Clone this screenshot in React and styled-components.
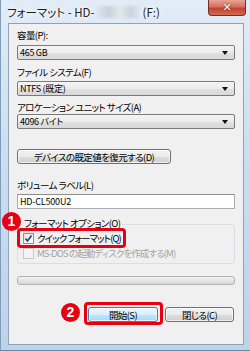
import React from 'react'
import styled, { createGlobalStyle } from 'styled-components'

const GlobalStyle = createGlobalStyle`
  html, body { margin: 0; padding: 0; background: #fff; }
  body { font-family: "Noto Sans CJK JP", "Noto Sans", sans-serif; }
`

const jp = `"Noto Sans CJK JP", "Noto Sans", sans-serif`

const Frame = styled.div`
  position: relative;
  width: 250px;
  height: 351px;
  box-sizing: border-box;
  background: linear-gradient(180deg, #e2ecf7 0%, #cddff1 40%, #bcd3ea 100%);
  border-left: 1px solid #7f9db9;
  border-bottom: 1px solid #6c87a3;
  display: flex;
  flex-direction: column;
  overflow: hidden;
`

const TitleBar = styled.div`
  height: 23px;
  display: flex;
  align-items: flex-start;
  justify-content: space-between;
  padding-left: 6px;
  padding-right: 4px;
`

const Title = styled.div`
  margin-top: 5px;
  font-family: ${jp};
  font-size: 11.5px;
  line-height: 14px;
  color: #1e1e1e;
  font-feature-settings: "palt";
  white-space: nowrap;
  display: flex;
  align-items: center;
  text-shadow: 0 0 6px #fff, 0 0 4px #fff;
`

const Blurred = styled.span`
  display: inline-block;
  width: 42px;
  height: 12px;
  margin: 0 4px 0 2px;
  background: linear-gradient(90deg, #dce4ec 0%, #c9d2dc 30%, #e3e8ee 55%, #cbd3dc 80%, #dde4eb 100%);
  filter: blur(1.2px);
`

const CloseBtn = styled.div`
  width: 38px;
  height: 16px;
  box-sizing: border-box;
  border: 1px solid #7a2a2a;
  border-top: none;
  border-radius: 0 0 4px 4px;
  background: linear-gradient(180deg, #e8a493 0%, #d4715e 45%, #c2432f 55%, #d06a53 100%);
  display: flex;
  align-items: center;
  justify-content: center;
  color: #fff;
  font-family: "DejaVu Sans", sans-serif;
  font-weight: bold;
  font-size: 11px;
  text-shadow: 0 0 2px #5a1a10;
`

const Panel = styled.div`
  margin-left: 7px;
  width: 236px;
  height: 322px;
  box-sizing: border-box;
  border: 1px solid #8fa2b8;
  background: #f0f0f0;
  padding: 5px 8px 0 8px;
  display: flex;
  flex-direction: column;
`

const Label = styled.div`
  font-family: ${jp};
  font-size: 9.5px;
  letter-spacing: -0.6px;
  line-height: 12px;
  height: 12px;
  color: #000;
  font-feature-settings: "palt";
  margin-top: ${p => p.$mt || 0}px;
  white-space: nowrap;
`

const Combo = styled.div`
  height: 15px;
  box-sizing: border-box;
  border: 1px solid #7a7a7a;
  border-radius: 2px;
  background: linear-gradient(180deg, #f4f4f4 0%, #ececec 50%, #e0e0e0 51%, #d9d9d9 100%);
  display: flex;
  align-items: center;
  justify-content: space-between;
  padding: 0 6px 0 2px;
  margin-top: ${p => p.$mt || 0}px;
  font-family: ${jp};
  font-size: 9px;
  letter-spacing: -0.3px;
  color: #000;
  font-feature-settings: "palt";
`

const Arrow = styled.span`
  width: 0;
  height: 0;
  border-left: 3.5px solid transparent;
  border-right: 3.5px solid transparent;
  border-top: 4px solid #111;
`

const Button = styled.div`
  width: ${p => p.$w}px;
  height: ${p => p.$h || 15}px;
  box-sizing: border-box;
  border: 1px solid ${p => (p.$primary ? '#3c7fb1' : '#707070')};
  border-radius: 3px;
  background: ${p =>
    p.$primary
      ? 'linear-gradient(180deg, #eaf6fd 0%, #d9f0fc 50%, #bee6fd 51%, #a7d9f5 100%)'
      : 'linear-gradient(180deg, #f2f2f2 0%, #ebebeb 50%, #dddddd 51%, #cfcfcf 100%)'};
  box-shadow: inset 0 0 0 1px rgba(255, 255, 255, 0.7);
  display: flex;
  align-items: center;
  justify-content: center;
  font-family: ${jp};
  font-size: 9.5px;
  letter-spacing: -0.6px;
  color: #000;
  font-feature-settings: "palt";
  margin-top: ${p => p.$mt || 0}px;
`

const TextBox = styled.div`
  height: 15px;
  box-sizing: border-box;
  border: 1px solid #abadb3;
  border-top-color: #8e8f8f;
  background: #fff;
  display: flex;
  align-items: center;
  padding-left: 2px;
  margin-top: 3px;
  font-family: ${jp};
  font-size: 9px;
  letter-spacing: -0.2px;
  color: #000;
`

const Group = styled.div`
  position: relative;
  margin-top: 15px;
  height: 40px;
  box-sizing: border-box;
  border: 1px solid #d5dfe5;
  border-radius: 3px;
  padding: 7px 0 0 5px;
  display: flex;
  flex-direction: column;
  gap: 3px;
`

const Legend = styled.div`
  position: absolute;
  top: -8px;
  left: 4px;
  padding: 0 2px;
  background: #f0f0f0;
  font-family: ${jp};
  font-size: 9.5px;
  letter-spacing: -0.6px;
  line-height: 13px;
  font-feature-settings: "palt";
  color: #000;
`

const CheckRow = styled.div`
  display: flex;
  align-items: center;
  gap: 3px;
  height: 12px;
  font-family: ${jp};
  font-size: 9.5px;
  letter-spacing: -0.9px;
  font-feature-settings: "palt";
  color: ${p => (p.$disabled ? '#a3a3a3' : '#000')};
  white-space: nowrap;
`

const Box = styled.span`
  width: 11px;
  height: 11px;
  flex: none;
  box-sizing: border-box;
  border: 1px solid ${p => (p.$disabled ? '#c8c8c8' : '#8f8f8f')};
  background: ${p => (p.$disabled ? '#f4f4f4' : 'linear-gradient(135deg, #e4e4e4, #fdfdfd)')};
  display: flex;
  align-items: center;
  justify-content: center;
`

const Progress = styled.div`
  margin-top: 12px;
  height: 9px;
  box-sizing: border-box;
  border: 1px solid #b2b2b2;
  border-radius: 3px;
  background: linear-gradient(180deg, #f3f3f3 0%, #e6e6e6 45%, #d6d6d6 100%);
`

const ButtonRow = styled.div`
  margin-top: 22px;
  display: flex;
  justify-content: flex-end;
  gap: 7px;
  padding-right: 1px;
`

const Badge = styled.div`
  position: absolute;
  left: ${p => p.$x}px;
  top: ${p => p.$y}px;
  width: 19px;
  height: 19px;
  border-radius: 50%;
  background: #e60012;
  color: #fff;
  font-family: "Liberation Sans", Arial, sans-serif;
  font-weight: bold;
  font-size: 14px;
  line-height: 19px;
  text-align: center;
`

const Highlight = styled.div`
  position: absolute;
  left: ${p => p.$x}px;
  top: ${p => p.$y}px;
  width: ${p => p.$w}px;
  height: ${p => p.$h}px;
  box-sizing: border-box;
  border: 3px solid #e60012;
  border-radius: 4px;
`

const Check = () => (
  <svg width="9" height="9" viewBox="0 0 9 9">
    <path d="M1.5 4.5 L3.5 7 L7.5 1.5" fill="none" stroke="#2a3f5a" strokeWidth="1.6" />
  </svg>
)

export default function App() {
  return (
    <>
      <GlobalStyle />
      <Frame>
        <TitleBar>
          <Title>
            フォーマット - HD-<Blurred />(F:)
          </Title>
          <CloseBtn>✕</CloseBtn>
        </TitleBar>
        <Panel>
          <Label>容量(P):</Label>
          <Combo $mt={4}>
            465 GB
            <Arrow />
          </Combo>
          <Label $mt={6}>ファイル システム(F)</Label>
          <Combo $mt={3}>
            NTFS (既定)
            <Arrow />
          </Combo>
          <Label $mt={5}>アロケーション ユニット サイズ(A)</Label>
          <Combo $mt={1}>
            4096 バイト
            <Arrow />
          </Combo>
          <Button $w={154} $h={15} $mt={20}>
            デバイスの既定値を復元する(D)
          </Button>
          <Label $mt={15}>ボリューム ラベル(L)</Label>
          <TextBox>HD-CL500U2</TextBox>
          <Group>
            <Legend>フォーマット オプション(O)</Legend>
            <CheckRow>
              <Box>
                <Check />
              </Box>
              クイック フォーマット(Q)
            </CheckRow>
            <CheckRow $disabled>
              <Box $disabled />
              MS-DOS の起動ディスクを作成する(M)
            </CheckRow>
          </Group>
          <Progress />
          <ButtonRow>
            <Button $w={70} $primary>
              開始(S)
            </Button>
            <Button $w={69}>閉じる(C)</Button>
          </ButtonRow>
        </Panel>
        <Badge $x={1} $y={212}>1</Badge>
        <Highlight $x={16} $y={228} $w={109} $h={20} />
        <Badge $x={60} $y={303}>2</Badge>
        <Highlight $x={83} $y={302} $w={79} $h={23} />
      </Frame>
    </>
  )
}
